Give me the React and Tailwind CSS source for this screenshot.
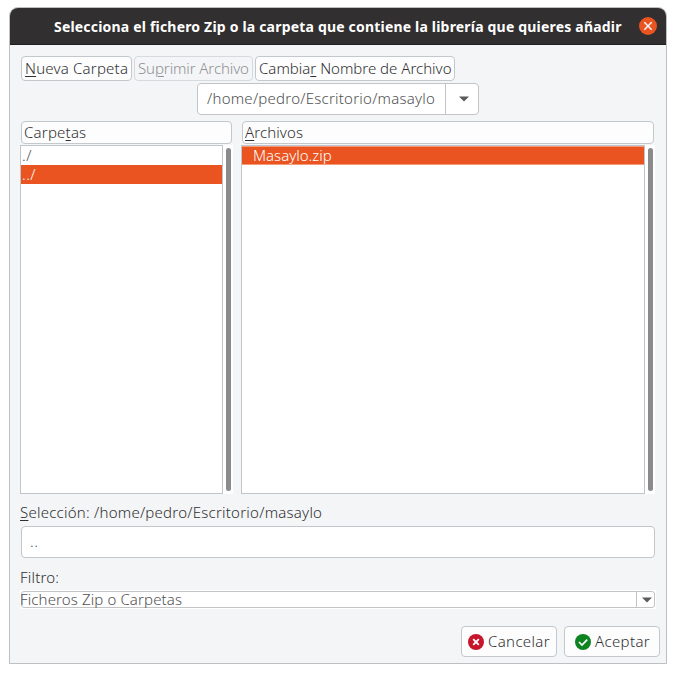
import React from "react";

const Key = ({ children }) => (
  <span className="underline decoration-1 underline-offset-2">{children}</span>
);

const ToolButton = ({ className, children }) => (
  <button
    className={`flex h-[25px] items-center rounded-[4px] border pb-[2px] pl-[3px] whitespace-nowrap ${className}`}
  >
    {children}
  </button>
);

const Caret = () => (
  <svg width="10" height="6" viewBox="0 0 10 6" className="block">
    <path d="M0 0.5H10L5 5.5Z" fill="#5b5b5c" />
  </svg>
);

const Scrollbar = () => (
  <div className="flex w-[10px] justify-center bg-white pt-[3px] pb-[3px]">
    <div className="w-[5px] rounded-full bg-[#8b8b8b]" />
  </div>
);

const Header = ({ className, children }) => (
  <div
    className={`flex h-[23px] items-center rounded-[4px] border border-[#c3c8cd] bg-[#fdfdfd] pb-[2px] pl-[2px] whitespace-nowrap ${className}`}
  >
    {children}
  </div>
);

const DialogButton = ({ icon, children, className }) => (
  <button
    className={`flex h-[31px] w-24 items-center gap-1 rounded-[4px] border border-[#c3c8cd] bg-[#fdfdfd] tracking-[0.35px] whitespace-nowrap ${className}`}
  >
    {icon}
    {children}
  </button>
);

export default function App() {
  return (
    <div className="h-[673px] w-[676px] bg-white pt-[7px] pl-[9px] font-['Noto_Sans',sans-serif] text-[15px] leading-[18px] font-light text-[#303032]">
      <div className="h-[657px] w-[658px] overflow-hidden rounded-t-[9px] border border-[#bebfc1] bg-[#f4f5f7]">
        <div className="flex h-[37px] items-center border-b border-[#201e1f] bg-[#322f30] pr-[9px] pl-[44px] text-[14px] font-bold text-white">
          <span className="w-[570px] pt-px tracking-[0.19px] whitespace-nowrap">
            Selecciona el fichero Zip o la carpeta que contiene la librería que quieres añadir
          </span>
          <svg width="18" height="18" viewBox="0 0 18 18" className="ml-auto block">
            <circle cx="9" cy="9" r="9" fill="#e95420" />
            <path d="M5.3 5.3L12.7 12.7M12.7 5.3L5.3 12.7" stroke="#fff" strokeWidth="1.4" />
          </svg>
        </div>

        <div className="flex gap-[2px] pt-[11px] pl-[11px]">
          <ToolButton className="w-[111px] border-[#c3c8cd] bg-[#fdfdfd] tracking-[0.2px]">
            <span><Key>N</Key>ueva Carpeta</span>
          </ToolButton>
          <ToolButton className="w-[119px] border-[#d6d9dd] bg-[#f4f5f7] tracking-[-0.1px] text-[#8f9193]">
            <span>Su<Key>p</Key>rimir Archivo</span>
          </ToolButton>
          <ToolButton className="w-[200px] border-[#c3c8cd] bg-[#fdfdfd]">
            <span>Cambia<Key>r</Key> Nombre de Archivo</span>
          </ToolButton>
        </div>

        <div className="mt-[2px] ml-[187px] flex h-[32px] w-[282px] rounded-[4px] border border-[#c4c4c6] bg-white text-[#505051]">
          <div className="flex flex-1 items-center pb-[2px] pl-[9px] tracking-[0.24px] whitespace-nowrap">
            <span>/home/pedro/Escritorio/masaylo</span>
          </div>
          <div className="flex w-[33px] items-center justify-center border-l border-[#c4c4c6] pl-[3px]">
            <Caret />
          </div>
        </div>

        <div className="mt-[6px] flex pl-[10px]">
          <div className="w-[213px]">
            <Header className="ml-px w-[211px] tracking-[0.2px]">
              <span>Carpe<Key>t</Key>as</span>
            </Header>
            <div className="mt-px flex h-[349px]">
              <div className="w-[203px] border border-[#bfc5cb] bg-white tracking-[0.5px]">
                <div className="h-[19px] pl-px text-[#505051]">./</div>
                <div className="h-[19px] bg-[#e95420] pl-px text-white">../</div>
              </div>
              <Scrollbar />
            </div>
          </div>
          <div className="ml-[8px] w-[414px]">
            <Header className="ml-px w-[412px] tracking-[0.1px]">
              <span><Key>A</Key>rchivos</span>
            </Header>
            <div className="mt-px flex h-[349px]">
              <div className="w-[404px] border border-[#bfc5cb] bg-white">
                <div className="h-[19px] border-y border-[#f39b79] bg-[#e95420] pl-[11px] leading-[16px] text-white">
                  Masaylo.zip
                </div>
              </div>
              <Scrollbar />
            </div>
          </div>
        </div>

        <div className="mt-[9px] h-[23px] pl-[10px] tracking-[0.24px] whitespace-nowrap">
          <span><Key>S</Key>elección: /home/pedro/Escritorio/masaylo</span>
        </div>
        <div className="ml-[11px] flex h-[32px] w-[634px] items-center rounded-[4px] border border-[#c3c6ca] bg-white pb-[2px] pl-[8px] tracking-[0.5px] text-[#505051]">
          ..
        </div>

        <div className="mt-[10px] h-[22px] pl-[10px] tracking-[0.2px]">Filtro:</div>
        <div className="ml-[10px] h-[19px] w-[636px] bg-white px-px py-px">
          <div className="flex h-[17px] rounded-[3px] border border-[#c4c4c6] text-[#505051]">
            <div className="-ml-[2px] flex-1 leading-[14px] tracking-[0.12px] whitespace-nowrap">
              <span>Ficheros Zip o Carpetas</span>
            </div>
            <div className="flex w-[18px] items-center justify-center border-l border-[#c4c4c6] pl-[2px]">
              <Caret />
            </div>
          </div>
        </div>

        <div className="mt-[17px] flex gap-[7px] pl-[451px]">
          <DialogButton
            className="pl-[6px]"
            icon={
              <svg width="16" height="16" viewBox="0 0 16 16" className="shrink-0">
                <circle cx="8" cy="8" r="8" fill="#c7162b" />
                <path d="M5.2 5.2L10.8 10.8M10.8 5.2L5.2 10.8" stroke="#fff" strokeWidth="1.9" />
              </svg>
            }
          >
            <span className="pb-[2px]">Cancelar</span>
          </DialogButton>
          <DialogButton
            className="pl-[10px]"
            icon={
              <svg width="16" height="16" viewBox="0 0 16 16" className="shrink-0">
                <circle cx="8" cy="8" r="8" fill="#0e8420" />
                <path d="M4 8L7 11L12.2 5.7" fill="none" stroke="#fff" strokeWidth="1.7" />
              </svg>
            }
          >
            <span className="pb-[2px]">Aceptar</span>
          </DialogButton>
        </div>
      </div>
    </div>
  );
}
